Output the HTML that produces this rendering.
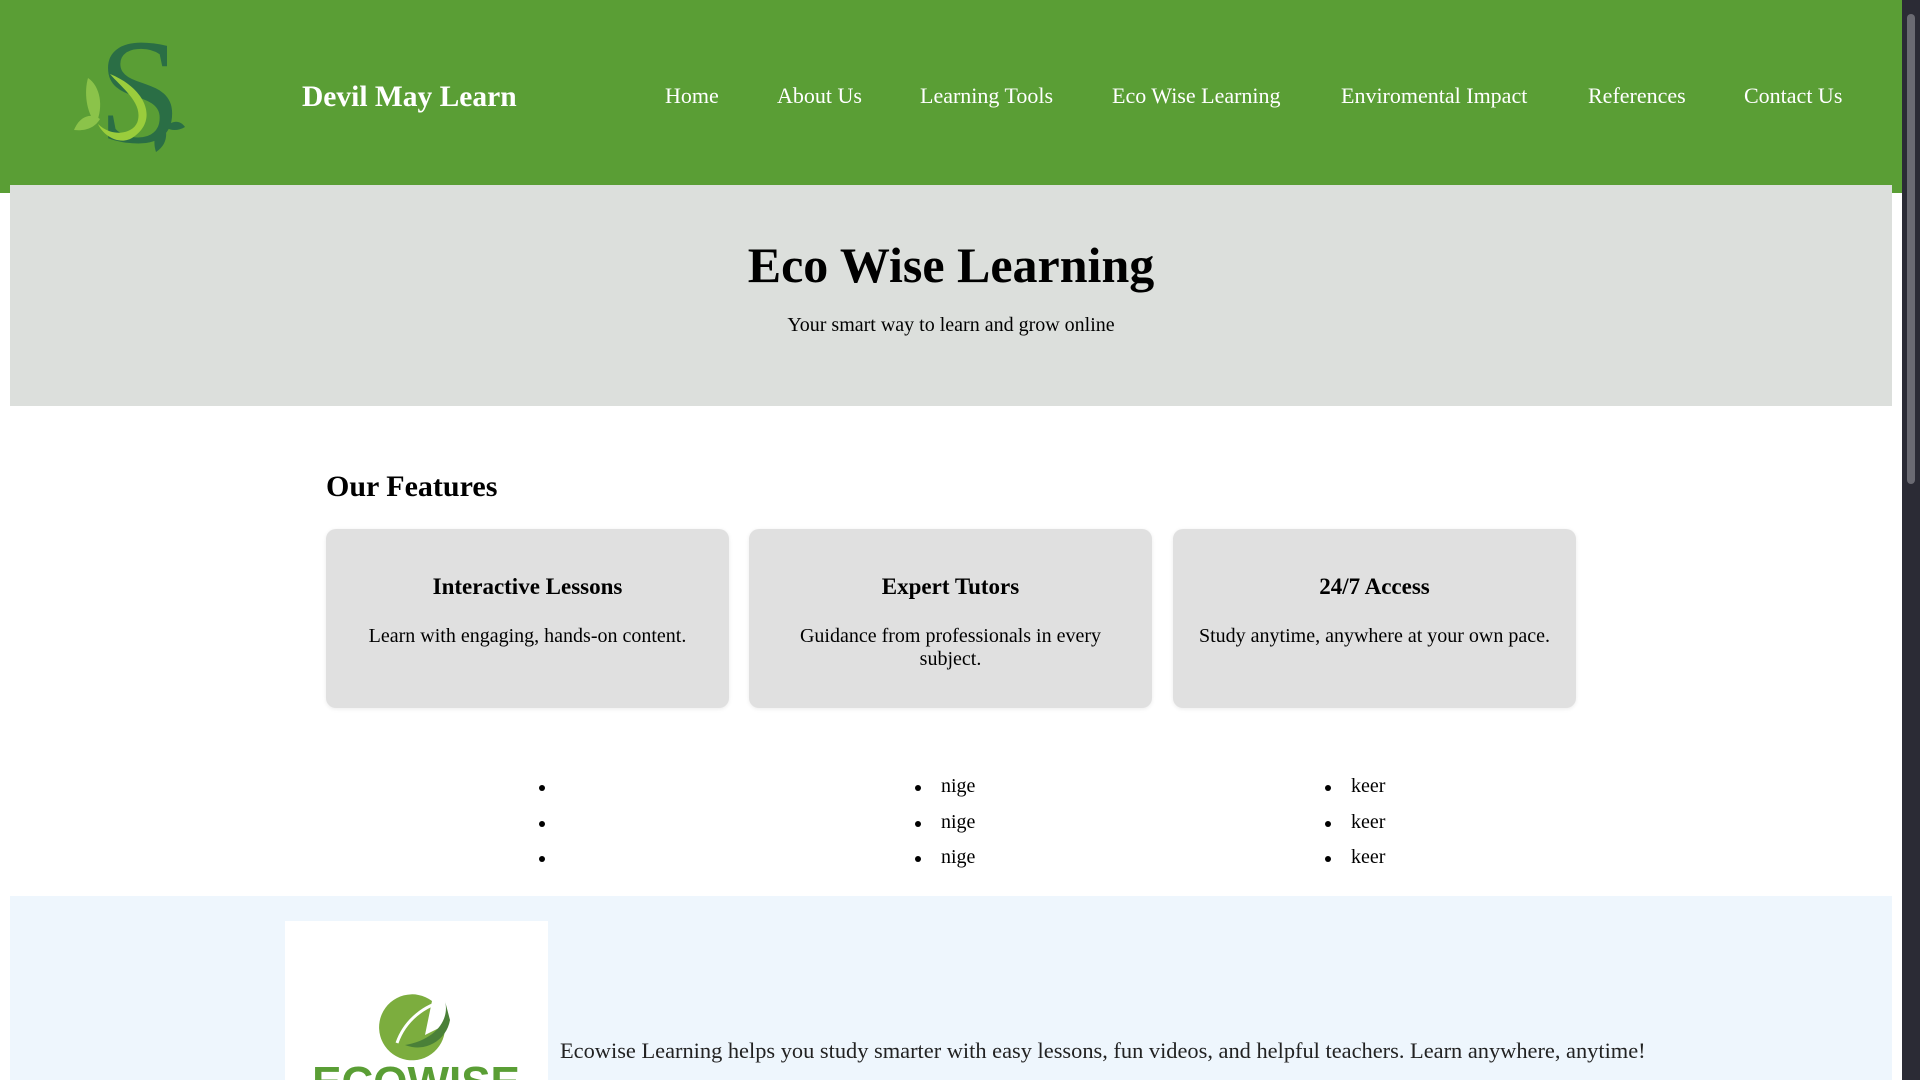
<!DOCTYPE html>
<html><head><meta charset="utf-8"><style>
*{margin:0;padding:0;box-sizing:border-box}
body{width:1920px;height:1080px;overflow:hidden;background:#fff;font-family:"Liberation Serif",serif;position:relative}
.hdr{position:absolute;left:0;top:0;width:1902px;height:193px;background:#5a9e35}
.brand{position:absolute;left:302px;top:81px;color:#fff;font-weight:bold;font-size:29.5px}
.nav a{position:absolute;top:83px;color:#fff;font-size:22px;text-decoration:none;white-space:nowrap}
.hero{position:absolute;left:10px;top:185px;width:1882px;height:221px;background:#dcdfdc;text-align:center}
.hero h1{font-size:50px;margin-top:51px}
.hero p{font-size:20px;margin-top:20px}
h2{position:absolute;left:326px;top:470px;font-size:30px}
.card{position:absolute;top:529px;width:403px;height:179px;background:#e0e0e0;border-radius:10px;text-align:center;box-shadow:0 1px 4px rgba(0,0,0,.08)}
.card h3{font-size:23px;margin-top:45px}
.card p{font-size:20px;margin:25px 20px 0;line-height:23px}
.li{position:absolute;font-size:20px}
.li span{position:absolute;left:-26px;top:10px;width:6px;height:6px;border-radius:50%;background:#000}
.bot{position:absolute;left:10px;top:896px;width:1882px;height:184px;background:#eef6fd}
.img{position:absolute;left:285px;top:921px;width:263px;height:159px;background:#fff;overflow:hidden}
.sb{position:absolute;left:1902px;top:0;width:18px;height:1080px;background:#2b2b35}
.sb div{position:absolute;left:5px;top:14px;width:8px;height:470px;background:#6a6a72;border-radius:4px}
</style></head><body>
<div class="hdr">
<svg style="position:absolute;left:60px;top:30px" width="140" height="125" viewBox="0 0 140 125">
<path d="M14 100 C20 85 32 83 40 89 C34 99 24 101 14 100Z" fill="#8bc34a"/>
<path d="M28 48 C40 56 44 76 36 94 C26 82 24 62 28 48Z" fill="#8bc34a"/>
<text x="38" y="112" font-family="Liberation Serif,serif" font-size="150" fill="#2a6e45">S</text>
<path d="M50 44 C85 58 100 90 72 108 C58 116 42 104 38 94 C52 108 75 104 78 90 C82 72 62 58 50 44Z" fill="#9acd3c"/>
<path d="M103 92 C108 102 108 114 96 122 C92 110 96 98 103 92Z" fill="#2a6e45"/>
<path d="M105 97 C113 90 120 90 125 97 C118 101 111 101 105 97Z" fill="#2a6e45"/>
</svg>
<div class="brand">Devil May Learn</div>
<div class="nav">
<a style="left:665px">Home</a><a style="left:777px">About Us</a><a style="left:920px">Learning Tools</a><a style="left:1112px">Eco Wise Learning</a><a style="left:1341px">Enviromental Impact</a><a style="left:1588px">References</a><a style="left:1744px">Contact Us</a>
</div>
</div>
<div class="hero"><h1>Eco Wise Learning</h1><p>Your smart way to learn and grow online</p></div>
<h2>Our Features</h2>
<div class="card" style="left:326px"><h3>Interactive Lessons</h3><p>Learn with engaging, hands-on content.</p></div>
<div class="card" style="left:749px"><h3>Expert Tutors</h3><p>Guidance from professionals in every subject.</p></div>
<div class="card" style="left:1173px"><h3>24/7 Access</h3><p>Study anytime, anywhere at your own pace.</p></div>
<div class="li" style="left:565px;top:775px"><span></span></div>
<div class="li" style="left:565px;top:811px"><span></span></div>
<div class="li" style="left:565px;top:846px"><span></span></div>
<div class="li" style="left:941px;top:775px"><span></span>nige</div>
<div class="li" style="left:941px;top:811px"><span></span>nige</div>
<div class="li" style="left:941px;top:846px"><span></span>nige</div>
<div class="li" style="left:1351px;top:775px"><span></span>keer</div>
<div class="li" style="left:1351px;top:811px"><span></span>keer</div>
<div class="li" style="left:1351px;top:846px"><span></span>keer</div>
<div class="bot"></div>
<div class="img">
<svg width="263" height="159" viewBox="0 0 263 159">
<g transform="translate(0,44)">
<path d="M147 36 A33 33 0 1 0 160 60 L140 70 Z" fill="#7cad3e"/>
<path d="M160 36 C165 55 150 75 120 80 A33 33 0 0 0 165 55 Z" fill="#4a8038"/>
<path d="M160 36 C140 40 120 55 112 78" stroke="#fff" stroke-width="3" fill="none"/>
</g>
<text x="131" y="176" text-anchor="middle" font-family="Liberation Sans,sans-serif" font-weight="bold" font-size="44" fill="#5a9e35">ECOWISE</text>
</svg>
</div>
<div style="position:absolute;left:560px;top:1038px;font-size:22.4px;color:#222">Ecowise Learning helps you study smarter with easy lessons, fun videos, and helpful teachers. Learn anywhere, anytime!</div>
<div class="sb"><div></div></div>
</body></html>
